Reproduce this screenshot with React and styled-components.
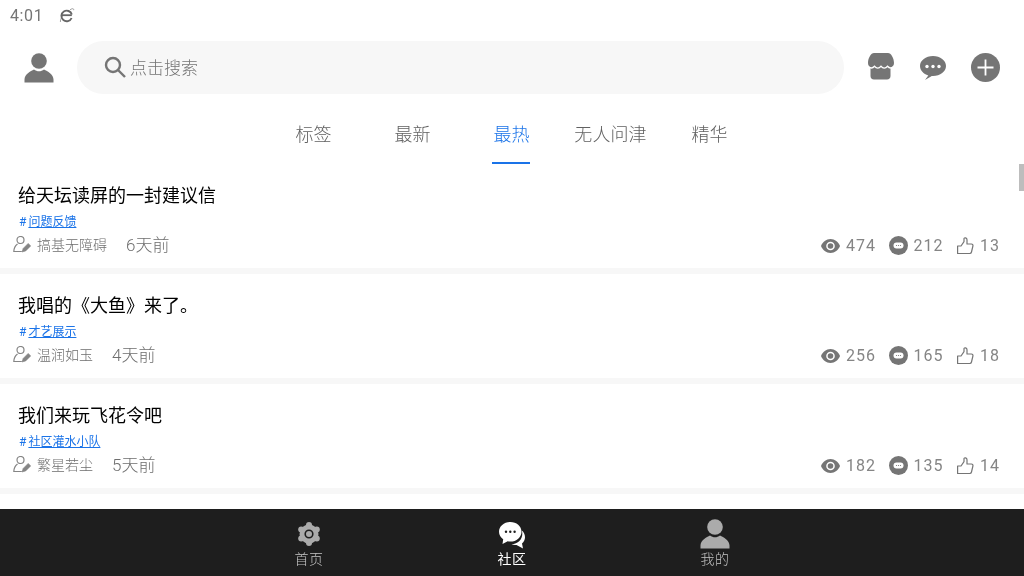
import React from 'react';
import styled, { createGlobalStyle } from 'styled-components';

const GlobalStyle = createGlobalStyle`
    html, body {
        margin: 0;
        padding: 0;
        background: #fff;
    }
    * {
        box-sizing: border-box;
    }
`;

const fontStack = `Roboto, "Noto Sans CJK SC", sans-serif`;

const Page = styled.div`
    position: relative;
    width: 1024px;
    height: 576px;
    display: flex;
    flex-direction: column;
    overflow: hidden;
    font-family: ${fontStack};
    font-weight: 300;
    will-change: transform;
`;

const StatusBar = styled.div`
    height: 30px;
    padding-left: 10px;
    display: flex;
    align-items: center;
    gap: 16px;
    color: #757575;
    font-size: 16px;
    font-weight: 400;
    letter-spacing: 0.6px;
    flex: none;
`;

const TopBar = styled.div`
    height: 75px;
    flex: none;
    display: flex;
    align-items: center;
    padding: 0 24px;
`;

const SearchBox = styled.div`
    width: 767px;
    height: 53px;
    margin: 0 24px 0 23px;
    border-radius: 27px;
    background: #f7f7f7;
    display: flex;
    align-items: center;
    padding: 0 0 1px 27px;
    gap: 4px;
    color: #757575;
    font-size: 17px;
`;

const SearchLabel = styled.span`
    margin-top: -1px;
`;

const TopActions = styled.div`
    display: flex;
    align-items: center;
    gap: 25px;
`;

const Tabs = styled.div`
    height: 59px;
    flex: none;
    display: flex;
    justify-content: center;
    padding-right: 1px;
`;

const Tab = styled.div`
    position: relative;
    width: 99px;
    display: flex;
    align-items: center;
    justify-content: center;
    padding-bottom: 4px;
    font-size: 18px;
    letter-spacing: 0.1px;
    color: ${(props) => (props.$active ? '#1a73e8' : '#616161')};
    ${(props) => props.$active && `
        &::after {
            content: '';
            position: absolute;
            left: 30px;
            bottom: 0;
            width: 38px;
            height: 2px;
            background: #1a73e8;
        }
    `}
`;

const Feed = styled.div`
    flex: 1;
    min-height: 0;
    overflow: hidden;
`;

const Post = styled.div`
    height: 110px;
    padding: 17px 24px 0 18px;
    border-bottom: 6px solid #f7f7f7;
`;

const PostTitle = styled.div`
    font-size: 18px;
    font-weight: 400;
    line-height: 30px;
    color: #000;
`;

const TagRow = styled.div`
    display: flex;
    align-items: baseline;
    gap: 2px;
    height: 20px;
    margin-top: 1px;
    padding-left: 1px;
    font-size: 12px;
    line-height: 20px;
    font-weight: 400;
    color: #1a73e8;
`;

const TagLink = styled.span`
    text-decoration: underline;
`;

const MetaRow = styled.div`
    display: flex;
    align-items: center;
    height: 28px;
    margin: -2px 0 0 -5px;
`;

const Author = styled.span`
    margin-left: 6px;
    font-size: 14px;
    color: #6e6e6e;
`;

const PostTime = styled.span`
    margin-left: 19px;
    padding-bottom: 2px;
    font-size: 17px;
    color: #6e6e6e;
`;

const Stats = styled.div`
    margin-left: auto;
    padding-top: 3px;
    display: flex;
    align-items: center;
    gap: 12.5px;
`;

const Stat = styled.div`
    display: flex;
    align-items: center;
    gap: 6px;
    font-size: 16px;
    font-weight: 400;
    letter-spacing: 1px;
    color: #858585;
`;

const Scrollbar = styled.div`
    position: absolute;
    right: 0;
    top: 164px;
    width: 5px;
    height: 27px;
    background: #bdbdbd;
`;

const BottomNav = styled.div`
    height: 67px;
    flex: none;
    background: #1e1e1e;
    display: flex;
    justify-content: center;
`;

const NavItem = styled.div`
    width: 203px;
    display: flex;
    flex-direction: column;
    align-items: center;
    justify-content: flex-end;
    padding-bottom: 7px;
    font-size: 14px;
    line-height: 20px;
    letter-spacing: 0.6px;
    font-weight: ${(props) => (props.$active ? 400 : 300)};
    color: ${(props) => (props.$active ? '#fff' : '#c4c4c4')};
`;

const NavIconSlot = styled.div`
    height: 32px;
    padding-bottom: ${(props) => props.$lift || 0}px;
    display: flex;
    align-items: flex-end;
    justify-content: center;
`;

const BrowserIcon = () => (
    <svg width="16" height="16" viewBox="0 0 16 16" fill="none" stroke="#666">
        <path d="M3 8.200h9.800" strokeWidth="1.800" />
        <path d="M12.600 11a5.300 5.300 0 1 1 .2-3.500" strokeWidth="1.900" />
        <path d="M11 2.800c2-1.400 4-1.700 3.700.4M3.300 9c-1.300 2.500-2.300 5-1.800 6" strokeWidth="0.600" />
    </svg>
);

const PersonIcon = ({ size = 30, color = '#757575' }) => (
    <svg width={size} height={size} viewBox="0 0 30 30" fill={color}>
        <circle cx="15" cy="8" r="7.800" />
        <path d="M0.500 29.500v-3c0-5 6-8.500 9.500-10 1.500 1.200 3.200 1.800 5 1.800s3.500-.6 5-1.800c3.500 1.500 9.500 5 9.500 10v3z" />
    </svg>
);

const SearchIcon = () => (
    <svg width="22" height="22" viewBox="0 0 22 22" fill="none" stroke="#757575" strokeWidth="2.400">
        <circle cx="9" cy="9" r="7" />
        <path d="M14 14l7 7" />
    </svg>
);

const ShopIcon = () => (
    <svg width="26" height="27" viewBox="0 0 26 27" style={{ marginBottom: 3 }}>
        <path fill="#757575" d="M6 0h14c3 0 6 5 6 10 0 2.500-1.500 4.500-3.500 5.500V23c0 2.200-1.300 3.500-3.500 3.500H6c-2.200 0-3.500-1.300-3.500-3.500v-7.500C1.500 14.500 0 12.500 0 10 0 5 3 0 6 0z" />
        <path fill="none" stroke="#fff" strokeWidth="1.300" d="M0 13c2 2.600 4.500 2.600 6.500.3 2 2.300 4.500 2.300 6.500 0 2 2.300 4.500 2.300 6.500 0 2 2.300 4.500 2.300 6.500-.3" />
    </svg>
);

const ChatIcon = () => (
    <svg width="27" height="24" viewBox="0 0 27 24">
        <path fill="#757575" d="M14 0C6.800 0 1 4.500 1 10c0 4.400 3.500 8 8.300 9.400L6 24l6.800-4c.4 0 .8 0 1.200 0 7.200 0 13-4.500 13-10S21.200 0 14 0z" />
        <circle cx="8" cy="10.500" r="1.700" fill="#fff" />
        <circle cx="14" cy="10.500" r="1.700" fill="#fff" />
        <circle cx="20" cy="10.500" r="1.700" fill="#fff" />
    </svg>
);

const PlusIcon = () => (
    <svg width="29" height="29" viewBox="0 0 29 29">
        <circle cx="14.500" cy="14.500" r="14.500" fill="#757575" />
        <path d="M14.500 6.500v16M6.500 14.500h16" stroke="#fff" strokeWidth="1.800" />
    </svg>
);

const AuthorIcon = () => (
    <svg width="18" height="17" viewBox="0 0 18 17" fill="none" stroke="#858585" strokeWidth="1.200">
        <circle cx="7.500" cy="4" r="3.500" />
        <path d="M4.500 8C2.500 9.500 1 11.500 .8 15.500h8" />
        <path d="M9 16l1.200-3.600 5-5 2.500 2.500-5 5z" fill="#858585" strokeWidth="0.600" />
    </svg>
);

const EyeIcon = () => (
    <svg width="19" height="14" viewBox="0 0 19 14">
        <path fill="#757575" d="M9.500 0C5.200 0 1.600 2.900 0 7c1.600 4.100 5.200 7 9.500 7S17.400 11.100 19 7C17.400 2.900 13.800 0 9.500 0z" />
        <circle cx="9.500" cy="7" r="4.300" fill="#fff" />
        <circle cx="9.500" cy="7" r="2.800" fill="#757575" />
    </svg>
);

const CommentIcon = () => (
    <svg width="19" height="19" viewBox="0 0 19 19">
        <circle cx="9.500" cy="9.500" r="9.500" fill="#757575" />
        <rect x="4.500" y="6.500" width="10" height="6" rx="3" fill="#fff" />
        <circle cx="7.500" cy="9.500" r="0.600" fill="#757575" />
        <circle cx="9.500" cy="9.500" r="0.600" fill="#757575" />
        <circle cx="11.500" cy="9.500" r="0.600" fill="#757575" />
    </svg>
);

const ThumbIcon = () => (
    <svg width="18" height="18" viewBox="-1 0 18 18" fill="none" stroke="#757575" strokeWidth="1.200" strokeLinejoin="round">
        <path d="M.6 9h3.400L7 4.600V1.500c0-1 3-1 3 1.200V7h4.500c1 0 1.700.9 1.400 2l-1.400 6c-.2.900-.9 1.500-1.800 1.500H.6z" />
    </svg>
);

const gearLobes = [0, 60, 120, 180, 240, 300];

const GearIcon = ({ color }) => (
    <svg width="24" height="24" viewBox="0 0 24 24">
        <circle cx="12" cy="12" r="9.500" fill={color} />
        {gearLobes.map((angle) => (
            <circle
                key={angle}
                cx={12 + 9 * Math.sin((angle * Math.PI) / 180)}
                cy={12 - 9 * Math.cos((angle * Math.PI) / 180)}
                r="3"
                fill={color}
            />
        ))}
        <circle cx="12" cy="12" r="3.800" fill="none" stroke="#1e1e1e" strokeWidth="1.600" />
    </svg>
);

const ChatsIcon = ({ color }) => (
    <svg width="26" height="27" viewBox="0 0 26 27">
        <path fill={color} d="M22.800 8.500c2 1.500 3.200 4 3.200 6.700 0 2.600-1.200 4.800-3 6.300l1 5-6.500-3.500c-2 .3-3.500 0-5-.7 6.500-.300 11-5 10.800-10.800 0-1-.2-2-.5-3z" />
        <path fill={color} d="M11.300 0C5 0 0 4.400 0 9.700c0 3 1.700 5.700 4.200 7.500L3.500 22l5.200-2.700c.9.200 1.700.3 2.600.3 6.200 0 11.200-4.400 11.200-9.900S17.500 0 11.300 0z" />
        <circle cx="7" cy="9.700" r="1.200" fill="#1e1e1e" />
        <circle cx="11.300" cy="9.700" r="1.200" fill="#1e1e1e" />
        <circle cx="15.600" cy="9.700" r="1.200" fill="#1e1e1e" />
    </svg>
);

const tabs = ['标签', '最新', '最热', '无人问津', '精华'];

const posts = [
    { title: '给天坛读屏的一封建议信', tag: '问题反馈', author: '搞基无障碍', time: '6天前', views: 474, comments: 212, likes: 13 },
    { title: '我唱的《大鱼》来了。', tag: '才艺展示', author: '温润如玉', time: '4天前', views: 256, comments: 165, likes: 18 },
    { title: '我们来玩飞花令吧', tag: '社区灌水小队', author: '繁星若尘', time: '5天前', views: 182, comments: 135, likes: 14 },
];

function App() {
    return (
        <Page>
            <GlobalStyle />
            <StatusBar>
                <span>4:01</span>
                <BrowserIcon />
            </StatusBar>
            <TopBar>
                <PersonIcon />
                <SearchBox>
                    <SearchIcon />
                    <SearchLabel>点击搜索</SearchLabel>
                </SearchBox>
                <TopActions>
                    <ShopIcon />
                    <ChatIcon />
                    <PlusIcon />
                </TopActions>
            </TopBar>
            <Tabs>
                {tabs.map((tab) => (
                    <Tab key={tab} $active={tab === '最热'}>{tab}</Tab>
                ))}
            </Tabs>
            <Feed>
                {posts.map((post) => (
                    <Post key={post.title}>
                        <PostTitle>{post.title}</PostTitle>
                        <TagRow>
                            <span>#</span>
                            <TagLink>{post.tag}</TagLink>
                        </TagRow>
                        <MetaRow>
                            <AuthorIcon />
                            <Author>{post.author}</Author>
                            <PostTime>{post.time}</PostTime>
                            <Stats>
                                <Stat><EyeIcon />{post.views}</Stat>
                                <Stat><CommentIcon />{post.comments}</Stat>
                                <Stat><ThumbIcon />{post.likes}</Stat>
                            </Stats>
                        </MetaRow>
                    </Post>
                ))}
            </Feed>
            <BottomNav>
                <NavItem>
                    <NavIconSlot $lift={3}><GearIcon color="#ababab" /></NavIconSlot>
                    首页
                </NavItem>
                <NavItem $active>
                    <NavIconSlot><ChatsIcon color="#fff" /></NavIconSlot>
                    社区
                </NavItem>
                <NavItem>
                    <NavIconSlot><PersonIcon color="#ababab" /></NavIconSlot>
                    我的
                </NavItem>
            </BottomNav>
            <Scrollbar />
        </Page>
    );
}

export default App;
